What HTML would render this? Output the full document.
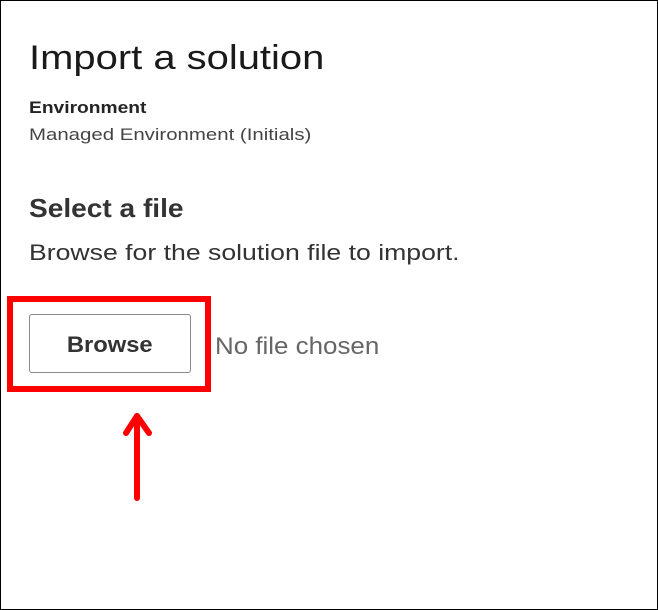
<!DOCTYPE html>
<html><head><style>
body{margin:0;width:658px;height:610px;position:relative;background:#fff;font-family:"Liberation Sans",sans-serif;overflow:hidden}
.frame{position:absolute;left:0;top:0;width:656px;height:608px;border:1px solid #000}
.t{position:absolute;left:29px;white-space:nowrap;color:#242424;transform-origin:left top}
.btn{position:absolute;left:29px;top:314px;width:162px;height:59px;border:1px solid #8a8a8a;border-radius:3px;box-sizing:border-box;display:flex;align-items:center;justify-content:center;font-size:22px;font-weight:bold;color:#333;padding-top:2px}
.btn span{display:inline-block;transform:scaleX(1.08)}
.red{position:absolute;left:7px;top:296px;width:204px;height:96px;box-sizing:border-box;border:6px solid #f00}
</style></head><body>
<div class="frame"></div>
<div class="t" style="top:39px;font-size:34px;color:#1a1a1a;transform:scaleX(1.175)">Import a solution</div>
<div class="t" style="top:98px;font-size:17px;font-weight:bold;transform:scaleX(1.13)">Environment</div>
<div class="t" style="top:125px;font-size:17px;color:#444;transform:scaleX(1.2)">Managed Environment (Initials)</div>
<div class="t" style="top:193px;font-size:26px;font-weight:bold;color:#333;transform:scaleX(1.08)">Select a file</div>
<div class="t" style="top:240px;font-size:22px;color:#333;transform:scaleX(1.21)">Browse for the solution file to import.</div>
<div class="btn"><span>Browse</span></div>
<div class="t" style="left:215px;top:333px;font-size:24px;color:#666;transform:scaleX(1.08)">No file chosen</div>
<div class="red"></div>
<svg style="position:absolute;left:0;top:0" width="658" height="610">
<g stroke="#f00" stroke-width="6" stroke-linecap="round" stroke-linejoin="round" fill="none">
<path d="M137 416 V498"/><path d="M126 433 L137 416 L149 433"/>
</g></svg>
</body></html>
